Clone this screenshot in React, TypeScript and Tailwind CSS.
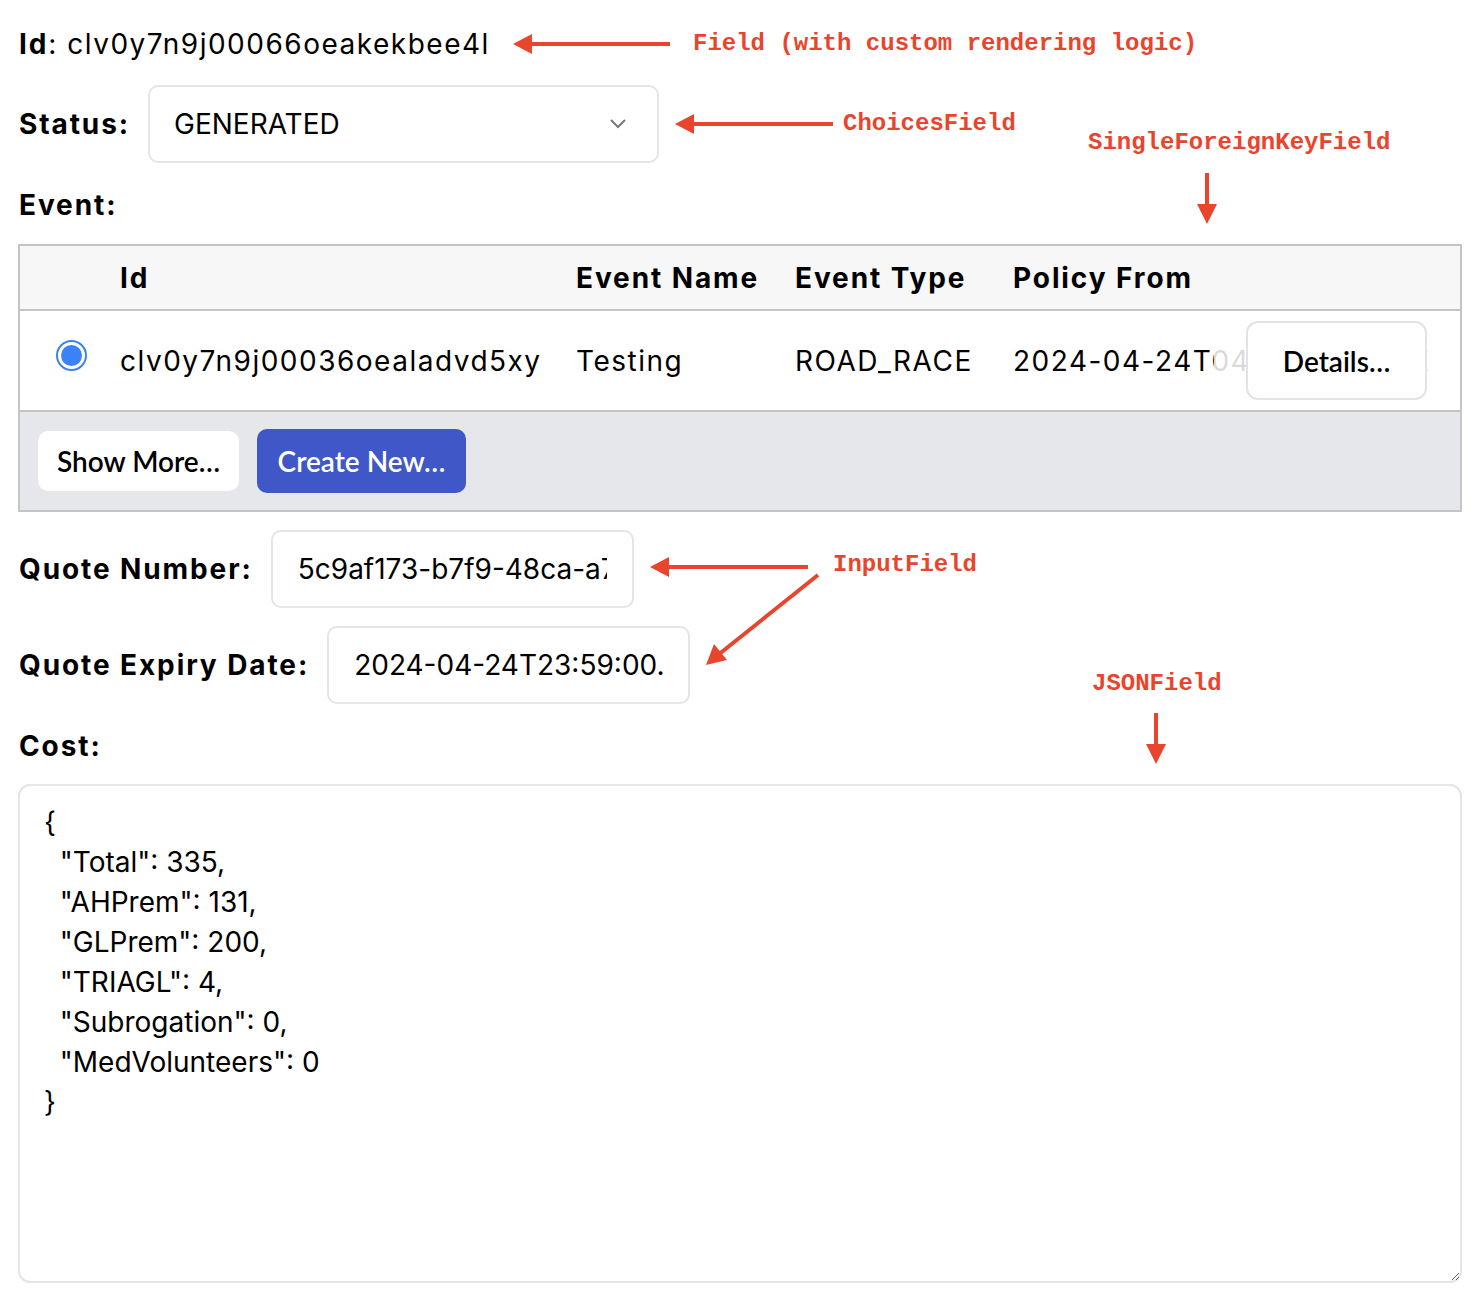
import React from "react";

const cost = {
  Total: 335,
  AHPrem: 131,
  GLPrem: 200,
  TRIAGL: 4,
  Subrogation: 0,
  MedVolunteers: 0,
};

const btnFont = { fontFamily: "Lato, 'Open Sans', sans-serif" };

function Arrows() {
  // annotation arrows drawn over the form
  const red = "#e8452c";
  return (
    <svg
      className="absolute left-0 top-0 pointer-events-none"
      width="1482"
      height="1302"
      viewBox="0 0 1482 1302"
    >
      <g stroke={red} strokeWidth="4" fill="none">
        <line x1="670" y1="44" x2="528" y2="44" />
        <line x1="833" y1="124" x2="690" y2="124" />
        <line x1="1207" y1="173" x2="1207" y2="208" />
        <line x1="808" y1="567" x2="665" y2="567" />
        <line x1="818" y1="575" x2="718" y2="655" />
        <line x1="1156" y1="713" x2="1156" y2="748" />
      </g>
      <g fill={red}>
        <polygon points="513,44 532,34 532,54" />
        <polygon points="675,124 694,114 694,134" />
        <polygon points="1207,224 1197,204 1217,204" />
        <polygon points="650,567 669,557 669,577" />
        <polygon points="706,665 714,644 727,660" />
        <polygon points="1156,764 1146,744 1166,744" />
      </g>
    </svg>
  );
}

function Note({ children, className }: { children: React.ReactNode; className: string }) {
  return (
    <span
      className={`absolute text-[24px] leading-[30px] font-bold text-[#e8452c] whitespace-pre ${className}`}
      style={{ fontFamily: "'Liberation Mono', monospace" }}
    >
      {children}
    </span>
  );
}

export default function App() {
  return (
    <div
      className="relative w-[1482px] h-[1302px] bg-white text-black overflow-hidden"
      style={{ fontFamily: "Inter, 'Liberation Sans', sans-serif" }}
    >
      <div className="flex flex-col pt-[24px] pl-[19px] pr-[20px] text-[28px] leading-[40px]">
        {/* Id */}
        <div className="h-[40px] tracking-[1.5px]">
          <span className="font-bold tracking-[1.9px]">Id</span>: clv0y7n9j00066oeakekbee4l
        </div>

        {/* Status */}
        <div className="mt-[21px] flex items-center gap-[18px]">
          <span className="font-bold tracking-[1.9px]">Status:</span>
          <div className="w-[511px] h-[78px] rounded-[10px] border-2 border-[#e5e5e5] flex items-center justify-between pl-[24px] pr-[30px]">
            <span>GENERATED</span>
            <svg width="18" height="12" viewBox="0 0 18 12">
              <polyline points="2,2 9,9 16,2" fill="none" stroke="#777" strokeWidth="2" />
            </svg>
          </div>
        </div>

        {/* Event */}
        <div className="mt-[22px] font-bold tracking-[1.9px]">Event:</div>
        <div className="mt-[19px] -ml-[1px] w-[1444px] border-2 border-[#c4c4c4]">
          <div className="grid grid-cols-[82px_456px_219px_218px_1fr] h-[65px] items-center bg-[#f7f7f7] border-b-2 border-[#c4c4c4] font-bold tracking-[1.9px]">
            <div />
            <div className="pl-[18px]">Id</div>
            <div className="pl-[18px]">Event Name</div>
            <div className="pl-[18px]">Event Type</div>
            <div className="pl-[18px]">Policy From</div>
          </div>
          <div className="relative grid grid-cols-[82px_456px_219px_218px_1fr] h-[101px] items-center border-b-2 border-[#c4c4c4] overflow-hidden tracking-[1.5px]">
            <div className="flex justify-end pr-[15px] -mt-[10px]">
              <span className="w-[31px] h-[31px] rounded-full border-2 border-[#3b82f6] bg-white flex items-center justify-center">
                <span className="w-[21px] h-[21px] rounded-full bg-[#3b82f6]" />
              </span>
            </div>
            <div className="pl-[18px] whitespace-nowrap">clv0y7n9j00036oealadvd5xy</div>
            <div className="pl-[18px]">Testing</div>
            <div className="pl-[18px]">ROAD_RACE</div>
            <div className="pl-[18px] whitespace-nowrap">2024-04-24T04:00:00.000Z</div>
            <div className="absolute right-0 top-0 bottom-0 w-[246px] bg-white/85 flex items-center justify-end pr-[33px]">
              <button
                className="w-[181px] h-[79px] rounded-[12px] border-2 border-[#e3e3e3] bg-white text-[28px] font-semibold tracking-normal"
                style={btnFont}
              >
                Details…
              </button>
            </div>
          </div>
          <div className="bg-[#e5e7eb] h-[98px] flex items-center gap-[18px] pl-[18px]">
            <button
              className="w-[201px] h-[60px] rounded-[10px] bg-white text-[28px] font-semibold"
              style={btnFont}
            >
              Show More…
            </button>
            <button
              className="w-[209px] h-[64px] rounded-[10px] bg-[#4057c7] text-white text-[28px] font-semibold"
              style={btnFont}
            >
              Create New…
            </button>
          </div>
        </div>

        {/* Quote Number */}
        <div className="mt-[18px] flex items-center gap-[18px]">
          <span className="font-bold tracking-[1.9px]">Quote Number:</span>
          <input
            readOnly
            value="5c9af173-b7f9-48ca-a7f1-3c2e9d8b6a01"
            className="w-[363px] h-[78px] rounded-[10px] border-2 border-[#e5e5e5] px-[25px] text-[28px] outline-none"
          />
        </div>

        {/* Quote Expiry Date */}
        <div className="mt-[18px] flex items-center gap-[18px]">
          <span className="font-bold tracking-[1.9px]">Quote Expiry Date:</span>
          <input
            readOnly
            value="2024-04-24T23:59:00.000Z"
            className="w-[363px] h-[78px] rounded-[10px] border-2 border-[#e5e5e5] px-[25px] text-[28px] outline-none"
          />
        </div>

        {/* Cost */}
        <div className="mt-[22px] font-bold tracking-[1.9px]">Cost:</div>
        <textarea
          readOnly
          value={JSON.stringify(cost, null, 2)}
          className="mt-[18px] -ml-[1px] w-[1444px] h-[499px] rounded-[12px] border-2 border-[#e5e5e5] pt-[16px] px-[24px] text-[28px] leading-[40px] outline-none"
        />
      </div>

      <Arrows />
      <Note className="left-[693px] top-[29px]">Field (with custom rendering logic)</Note>
      <Note className="left-[843px] top-[109px]">ChoicesField</Note>
      <Note className="left-[1088px] top-[128px]">SingleForeignKeyField</Note>
      <Note className="left-[833px] top-[550px]">InputField</Note>
      <Note className="left-[1092px] top-[669px]">JSONField</Note>
    </div>
  );
}
